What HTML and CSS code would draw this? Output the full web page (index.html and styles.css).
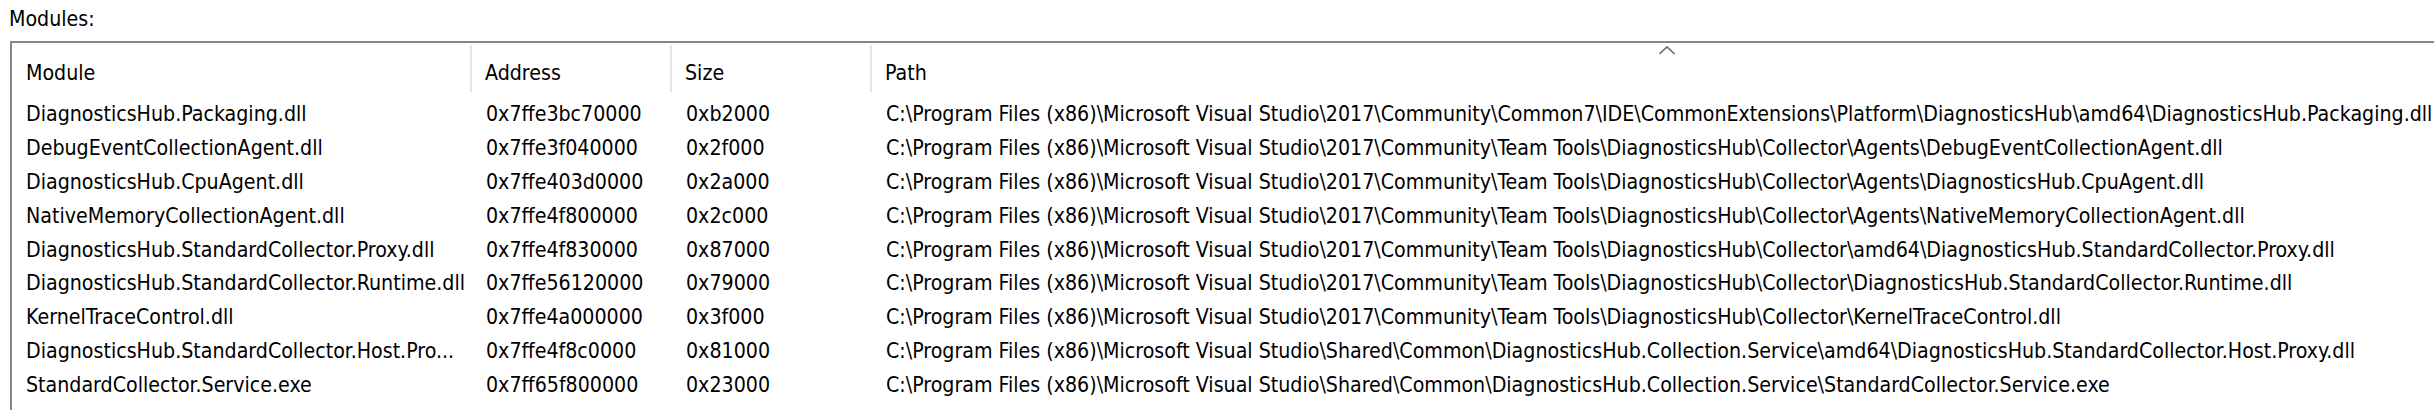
FILE: index.html
```html
<!DOCTYPE html>
<html>
<head>
<meta charset="utf-8">
<link rel="stylesheet" href="styles.css">
</head>
<body>
<div class="label">Modules:</div>
<div class="listview">
  <div class="row header">
    <div class="cell hcell">Module</div>
    <div class="cell hcell">Address</div>
    <div class="cell hcell">Size</div>
    <div class="cell hcell path-head">Path<svg class="sort" width="18" height="10" viewBox="0 0 18 10"><polyline points="1.5,9 9,1.8 16.5,9" fill="none" stroke="#6b6b6b" stroke-width="1.6"/></svg></div>
  </div>
  <div class="row"><div class="cell">DiagnosticsHub.Packaging.dll</div><div class="cell">0x7ffe3bc70000</div><div class="cell">0xb2000</div><div class="cell">C:\Program Files (x86)\Microsoft Visual Studio\2017\Community\Common7\IDE\CommonExtensions\Platform\DiagnosticsHub\amd64\DiagnosticsHub.Packaging.dll</div></div>
  <div class="row"><div class="cell">DebugEventCollectionAgent.dll</div><div class="cell">0x7ffe3f040000</div><div class="cell">0x2f000</div><div class="cell">C:\Program Files (x86)\Microsoft Visual Studio\2017\Community\Team Tools\DiagnosticsHub\Collector\Agents\DebugEventCollectionAgent.dll</div></div>
  <div class="row"><div class="cell">DiagnosticsHub.CpuAgent.dll</div><div class="cell">0x7ffe403d0000</div><div class="cell">0x2a000</div><div class="cell">C:\Program Files (x86)\Microsoft Visual Studio\2017\Community\Team Tools\DiagnosticsHub\Collector\Agents\DiagnosticsHub.CpuAgent.dll</div></div>
  <div class="row"><div class="cell">NativeMemoryCollectionAgent.dll</div><div class="cell">0x7ffe4f800000</div><div class="cell">0x2c000</div><div class="cell">C:\Program Files (x86)\Microsoft Visual Studio\2017\Community\Team Tools\DiagnosticsHub\Collector\Agents\NativeMemoryCollectionAgent.dll</div></div>
  <div class="row"><div class="cell">DiagnosticsHub.StandardCollector.Proxy.dll</div><div class="cell">0x7ffe4f830000</div><div class="cell">0x87000</div><div class="cell">C:\Program Files (x86)\Microsoft Visual Studio\2017\Community\Team Tools\DiagnosticsHub\Collector\amd64\DiagnosticsHub.StandardCollector.Proxy.dll</div></div>
  <div class="row"><div class="cell">DiagnosticsHub.StandardCollector.Runtime.dll</div><div class="cell">0x7ffe56120000</div><div class="cell">0x79000</div><div class="cell">C:\Program Files (x86)\Microsoft Visual Studio\2017\Community\Team Tools\DiagnosticsHub\Collector\DiagnosticsHub.StandardCollector.Runtime.dll</div></div>
  <div class="row"><div class="cell">KernelTraceControl.dll</div><div class="cell">0x7ffe4a000000</div><div class="cell">0x3f000</div><div class="cell">C:\Program Files (x86)\Microsoft Visual Studio\2017\Community\Team Tools\DiagnosticsHub\Collector\KernelTraceControl.dll</div></div>
  <div class="row"><div class="cell">DiagnosticsHub.StandardCollector.Host.Pro...</div><div class="cell">0x7ffe4f8c0000</div><div class="cell">0x81000</div><div class="cell">C:\Program Files (x86)\Microsoft Visual Studio\Shared\Common\DiagnosticsHub.Collection.Service\amd64\DiagnosticsHub.StandardCollector.Host.Proxy.dll</div></div>
  <div class="row"><div class="cell">StandardCollector.Service.exe</div><div class="cell">0x7ff65f800000</div><div class="cell">0x23000</div><div class="cell">C:\Program Files (x86)\Microsoft Visual Studio\Shared\Common\DiagnosticsHub.Collection.Service\StandardCollector.Service.exe</div></div>
</div>
</body>
</html>
```
FILE: styles.css
```css
html, body {
  margin: 0;
  padding: 0;
  background: #ffffff;
  overflow: hidden;
}
body {
  width: 2434px;
  height: 410px;
  font-family: "DejaVu Sans Condensed", "DejaVu Sans", sans-serif;
  font-stretch: condensed;
  font-size: 21.2px;
  color: #000000;
}
.label {
  padding: 7px 0 0 9px;
  height: 41px;
  line-height: 24px;
  box-sizing: border-box;
}
.listview {
  margin-left: 10px;
  width: 2470px;
  border-top: 2px solid #828790;
  border-left: 2px solid #828790;
  height: 400px;
}
.row {
  display: grid;
  grid-template-columns: 460px 200px 200px 1590px;
  height: 33.8px;
  align-items: center;
}
.cell {
  padding-left: 14px;
  padding-top: 9px;
  white-space: nowrap;
  overflow: hidden;
  line-height: 24px;
}
.header {
  height: 50px;
  align-items: stretch;
}
.hcell {
  position: relative;
  display: flex;
  align-items: center;
  padding-left: 13px;
  padding-top: 9px;
  border-right: 2px solid #e5e5e5;
  margin: 2px 0 1px;
}
.hcell:first-child {
  padding-left: 14px;
}
.path-head {
  border-right: none;
}
.sort {
  position: absolute;
  top: 0;
  left: 50%;
  transform: translateX(-50%);
}
```
